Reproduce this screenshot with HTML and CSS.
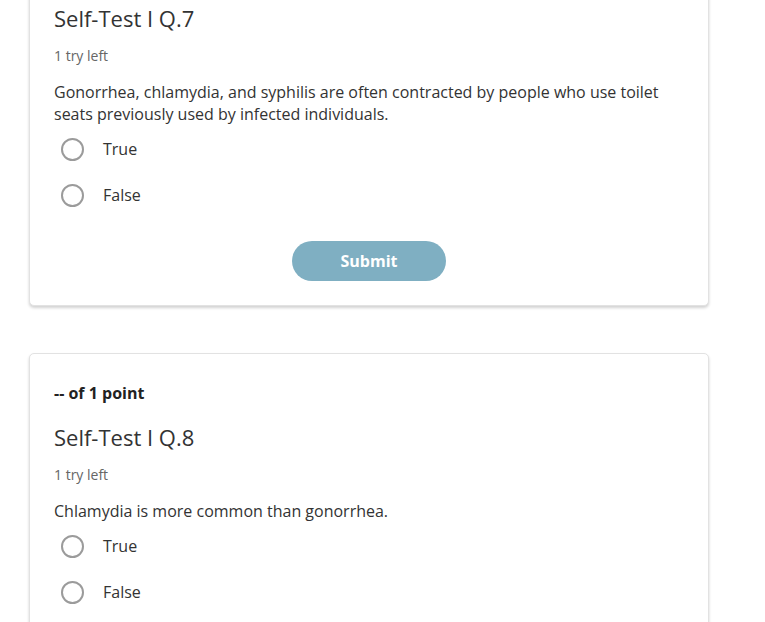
FILE: index.html
```html
<!DOCTYPE html>
<html>
<head>
<meta charset="utf-8">
<link rel="stylesheet" href="styles.css">
</head>
<body>
<div class="page">
  <section class="card">
    <div class="points">-- of 1 point</div>
    <h2 class="title">Self-Test I Q.7</h2>
    <div class="tries">1 try left</div>
    <p class="question">Gonorrhea, chlamydia, and syphilis are often contracted by people who use toilet seats previously used by infected individuals.</p>
    <div class="options">
      <label class="option"><span class="radio"></span><span class="label">True</span></label>
      <label class="option"><span class="radio"></span><span class="label">False</span></label>
    </div>
    <div class="actions"><button class="submit">Submit</button></div>
  </section>
  <section class="card">
    <div class="points">-- of 1 point</div>
    <h2 class="title">Self-Test I Q.8</h2>
    <div class="tries">1 try left</div>
    <p class="question">Chlamydia is more common than gonorrhea.</p>
    <div class="options">
      <label class="option"><span class="radio"></span><span class="label">True</span></label>
      <label class="option"><span class="radio"></span><span class="label">False</span></label>
    </div>
    <div class="actions"><button class="submit">Submit</button></div>
  </section>
</div>
</body>
</html>
```
FILE: styles.css
```css
html, body {
  margin: 0;
  padding: 0;
  background: #fff;
  font-family: "Open Sans", "Liberation Sans", sans-serif;
  color: #333;
  overflow: hidden;
}
.page {
  width: 680px;
  margin-left: 29px;
  margin-top: -66px;
  display: flex;
  flex-direction: column;
  gap: 47px;
}
.card {
  background: #fff;
  border: 1px solid #e2e2e2;
  border-radius: 5px;
  box-shadow: 0 2px 3px rgba(0,0,0,0.18);
  padding: 27px 24px 24px 24px;
}
.points {
  font-size: 16px;
  font-weight: 700;
  line-height: 24px;
  color: #222;
}
.title {
  margin: 17px 0 0 0;
  font-size: 22px;
  font-weight: 400;
  line-height: 30px;
  color: #333;
}
.tries {
  margin-top: 13px;
  font-size: 14px;
  line-height: 20px;
  color: #666;
}
.question {
  margin: 15px 0 0 0;
  font-size: 16px;
  line-height: 22px;
  color: #333;
}
.options {
  display: flex;
  flex-direction: column;
  margin-top: 1px;
}
.option {
  display: flex;
  align-items: center;
  height: 46px;
}
.radio {
  box-sizing: border-box;
  width: 23px;
  height: 23px;
  border: 2px solid #9b9b9b;
  border-radius: 50%;
  margin-left: 7px;
  margin-right: 19px;
}
.label {
  font-size: 16px;
  color: #333;
}
.actions {
  display: flex;
  justify-content: center;
  margin-top: 23px;
}
.submit {
  width: 154px;
  height: 40px;
  border: none;
  border-radius: 20px;
  background: #7fafc2;
  color: #fff;
  font-family: "Open Sans", "Liberation Sans", sans-serif;
  font-weight: 700;
  font-size: 16px;
}
```
